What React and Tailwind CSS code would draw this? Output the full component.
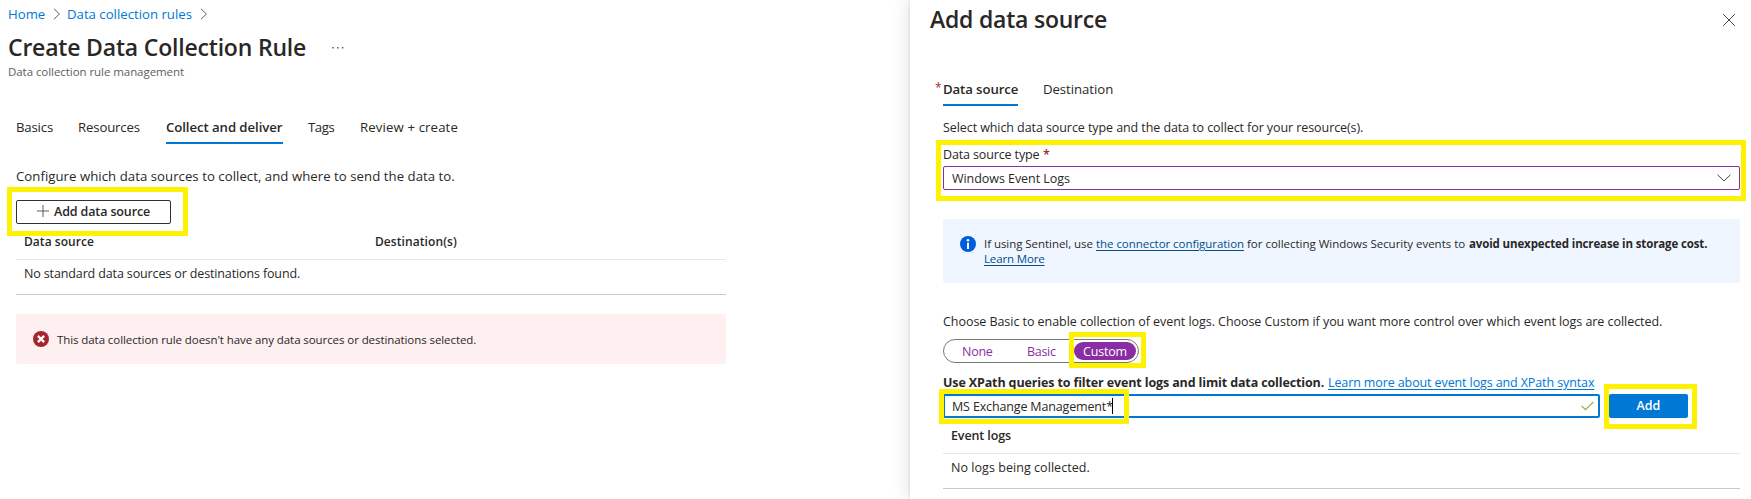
const lineIcon = { fill: "none", stroke: "currentColor", strokeWidth: 1 };

function Crumb({ className }) {
  return (
    <svg className={className} width="8" height="12" viewBox="0 0 8 12" {...lineIcon}>
      <path d="M1 .8 6.4 6 1 11.2" />
    </svg>
  );
}

function Highlight({ className }) {
  return <div className={`pointer-events-none absolute border-5 border-[#fff200] ${className}`} />;
}

function Tab({ children, active, className }) {
  return (
    <div
      className={`h-[27px] whitespace-nowrap text-[13.2px] leading-5 ${
        active ? "border-b-2 border-[#0078d4] font-semibold" : ""
      } ${className}`}
    >
      {children}
    </div>
  );
}

function RulePage() {
  return (
    <main className="relative w-[910px] shrink-0 pt-1">
      <nav className="flex h-5 items-center pl-2 text-[13.2px] leading-5 text-[#0078d4]">
        <a className="w-[45px]">Home</a>
        <Crumb className="mr-[6px] text-[#605e5c]" />
        <a className="w-[133px] whitespace-nowrap">Data collection rules</a>
        <Crumb className="text-[#605e5c]" />
      </nav>
      <header className="pl-2">
        <div className="mt-[7px] flex h-8 items-center">
          <h1 className="w-[324px] whitespace-nowrap text-[23px] font-semibold leading-8 tracking-[-0.19px]">
            Create Data Collection Rule
          </h1>
          <svg className="mt-[2px] text-[#605e5c]" width="12" height="2" viewBox="0 0 12 2" fill="currentColor">
            <path d="M.3 0h1.5v1.6H.3zM5.1 0h1.5v1.6H5.1zM9.9 0h1.5v1.6H9.9z" />
          </svg>
        </div>
        <p className="-mt-px text-[11.5px] leading-5 tracking-[-0.06px] text-[#605e5c]">
          Data collection rule management
        </p>
      </header>
      <div className="mt-[35px] flex pl-4">
        <Tab className="w-[62px] tracking-[-0.17px]">Basics</Tab>
        <Tab className="w-[88px] tracking-[-0.15px]">Resources</Tab>
        <Tab active className="mr-[25px] w-[117px] tracking-[-0.07px]">Collect and deliver</Tab>
        <Tab className="w-[52px] tracking-[-0.4px]">Tags</Tab>
        <Tab className="tracking-[0.13px]">Review + create</Tab>
      </div>
      <section className="ml-4 mt-[22px] w-[710px]">
        <p className="text-[13.2px] leading-5 tracking-[0.04px]">
          Configure which data sources to collect, and where to send the data to.
        </p>
        <button className="mt-[14px] flex h-6 w-[155px] items-center rounded-xs border border-[#323130] pl-5 text-[12.5px] font-semibold leading-5 tracking-[-0.13px]">
          <svg className="mb-[2px] mr-[5px] text-[#605e5c]" width="12" height="12" viewBox="0 0 12 12" {...lineIcon}>
            <path d="M6 0v12M0 6h12" />
          </svg>
          Add data source
        </button>
        <div className="mt-2 flex border-b border-[#e6e6e6] pb-[7px] pl-2 text-[12px] font-semibold leading-5">
          <div className="w-[351px] tracking-[0.05px]">Data source</div>
          <div className="tracking-[0.08px]">Destination(s)</div>
        </div>
        <div className="border-b border-[#c8c8c8] pb-[10px] pl-2 pt-1 text-[12.5px] leading-5 tracking-[-0.13px]">
          No standard data sources or destinations found.
        </div>
        <div className="mt-[19px] flex h-[50px] items-center rounded-xs bg-[#feeff0] pl-[17px] text-[11.5px] leading-5 tracking-[-0.08px]">
          <svg className="mr-2" width="16" height="16" viewBox="0 0 16 16">
            <circle cx="8" cy="8" r="8" fill="#a4262c" />
            <path d="m4.9 4.9 6.2 6.2m0-6.2-6.2 6.2" stroke="#fff" strokeWidth="2.3" />
          </svg>
          <span className="pt-[2px]">
            This data collection rule doesn't have any data sources or destinations selected.
          </span>
        </div>
      </section>
      <Highlight className="left-[7px] top-[187px] h-[49px] w-[181px]" />
    </main>
  );
}

function SourcePanel() {
  return (
    <aside className="relative w-[841px] shrink-0 bg-white pt-[3px] shadow-[0_0_3px_rgba(0,0,0,0.12),0_0_18px_rgba(0,0,0,0.14)]">
      <div className="flex h-8 items-center justify-between pl-5 pr-4">
        <h2 className="text-[23px] font-semibold leading-8 tracking-[-0.22px]">Add data source</h2>
        <svg className="mt-[2px] text-[#484644]" width="12" height="12" viewBox="0 0 12 12" {...lineIcon}>
          <path d="m.2.2 11.6 11.6m0-11.6L.2 11.8" />
        </svg>
      </div>
      <div className="mt-11 flex pl-[25px]">
        <span className="w-2 text-[12px] leading-[18px] text-[#a4262c]">*</span>
        <Tab active className="mr-[25px] w-[75px] tracking-[-0.1px]">Data source</Tab>
        <Tab className="tracking-[-0.05px]">Destination</Tab>
      </div>
      <div className="ml-[33px] mt-3 w-[797px] whitespace-nowrap text-[12.5px] leading-5">
        <p className="tracking-[-0.08px]">
          Select which data source type and the data to collect for your resource(s).
        </p>
        <label className="mt-[7px] flex">
          <span className="w-[100px] tracking-[-0.13px]">Data source type</span>
          <span className="font-semibold text-[#a4262c]">*</span>
        </label>
        <div className="mt-px flex h-6 items-center justify-between rounded-xs border border-[#8a2da5] pl-2 pr-2">
          <span className="pt-[2px] tracking-[-0.05px]">Windows Event Logs</span>
          <svg className="text-[#484644]" width="14" height="8" viewBox="0 0 14 8" {...lineIcon}>
            <path d="m.6.8 6.4 6.2L13.4.8" />
          </svg>
        </div>
        <div className="mt-[29px] flex h-16 rounded-xs bg-[#eff6ff] pl-[17px] pt-[17px] text-[11.5px] leading-[15px]">
          <svg className="mr-2 shrink-0" width="16" height="16" viewBox="0 0 16 16">
            <circle cx="8" cy="8" r="8" fill="#015cda" />
            <circle cx="8" cy="4.2" r="1.3" fill="#fff" />
            <path d="M7 6.8h2V13H7z" fill="#fff" />
          </svg>
          <div>
            <div className="flex">
              <span className="w-[112px] tracking-[-0.05px]">If using Sentinel, use</span>
              <a className="mr-[3px] w-[148px] tracking-[-0.05px] text-[#004e8c] underline underline-offset-2">
                the connector configuration
              </a>
              <span className="w-[222px] tracking-[-0.02px]">for collecting Windows Security events to</span>
              <b className="tracking-[-0.13px]">avoid unexpected increase in storage cost.</b>
            </div>
            <a className="tracking-[-0.15px] text-[#004e8c] underline underline-offset-2">Learn More</a>
          </div>
        </div>
        <p className="mt-[29px] tracking-[-0.05px]">
          Choose Basic to enable collection of event logs. Choose Custom if you want more control over which event
          logs are collected.
        </p>
        <div className="mt-[7px] flex h-6 w-[196px] items-center rounded-full border border-[#7a7876] pl-[18px] text-[#8a2da5]">
          <span className="w-[65px] pt-[2px] tracking-[-0.25px]">None</span>
          <span className="w-[47px] pt-[2px] tracking-[-0.3px]">Basic</span>
          <span className="h-[18px] w-[62px] rounded-full bg-[#8a2da5] text-center leading-[19px] tracking-[-0.17px] text-white">
            Custom
          </span>
        </div>
        <div className="mt-[10px] flex">
          <b className="w-[385px] tracking-[-0.13px]">
            Use XPath queries to filter event logs and limit data collection.
          </b>
          <a className="tracking-[-0.11px] text-[#0078d4] underline underline-offset-2">
            Learn more about event logs and XPath syntax
          </a>
        </div>
        <div className="mt-px flex gap-[9px]">
          <div className="flex h-6 w-[657px] items-center rounded-xs border-2 border-[#0078d4] pl-[7px] pr-1">
            <span className="pt-[2px] tracking-[-0.15px]">MS Exchange Management*</span>
            <span className="-ml-px h-4 w-px bg-black" />
            <svg className="ml-auto text-[#7db93b]" width="13" height="10" viewBox="0 0 13 10" fill="none" stroke="currentColor" strokeWidth="1.2">
              <path d="m.6 4.8 3.9 3.9L12.4.8" />
            </svg>
          </div>
          <button className="h-6 w-[79px] rounded-xs bg-[#0078d4] pb-px text-center font-semibold leading-[22px] text-white">
            Add
          </button>
        </div>
        <div className="mt-2 border-b border-[#e6e6e6] pb-[7px] pl-2 font-semibold tracking-[-0.12px]">Event logs</div>
        <div className="border-b border-[#c8c8c8] pb-[10px] pl-2 pt-1 tracking-[0.05px]">No logs being collected.</div>
      </div>
      <Highlight className="left-[26px] top-[140px] h-[61px] w-[810px]" />
      <Highlight className="left-[159px] top-[332px] h-9 w-[77px]" />
      <Highlight className="left-[29px] top-[389px] h-[35px] w-[190px]" />
      <Highlight className="left-[694px] top-[384px] h-[45px] w-[93px]" />
    </aside>
  );
}

export default function App() {
  return (
    <div className="flex h-[499px] w-[1751px] overflow-hidden bg-white font-['Open_Sans','Noto_Sans',sans-serif] text-[#292827]">
      <RulePage />
      <SourcePanel />
    </div>
  );
}
